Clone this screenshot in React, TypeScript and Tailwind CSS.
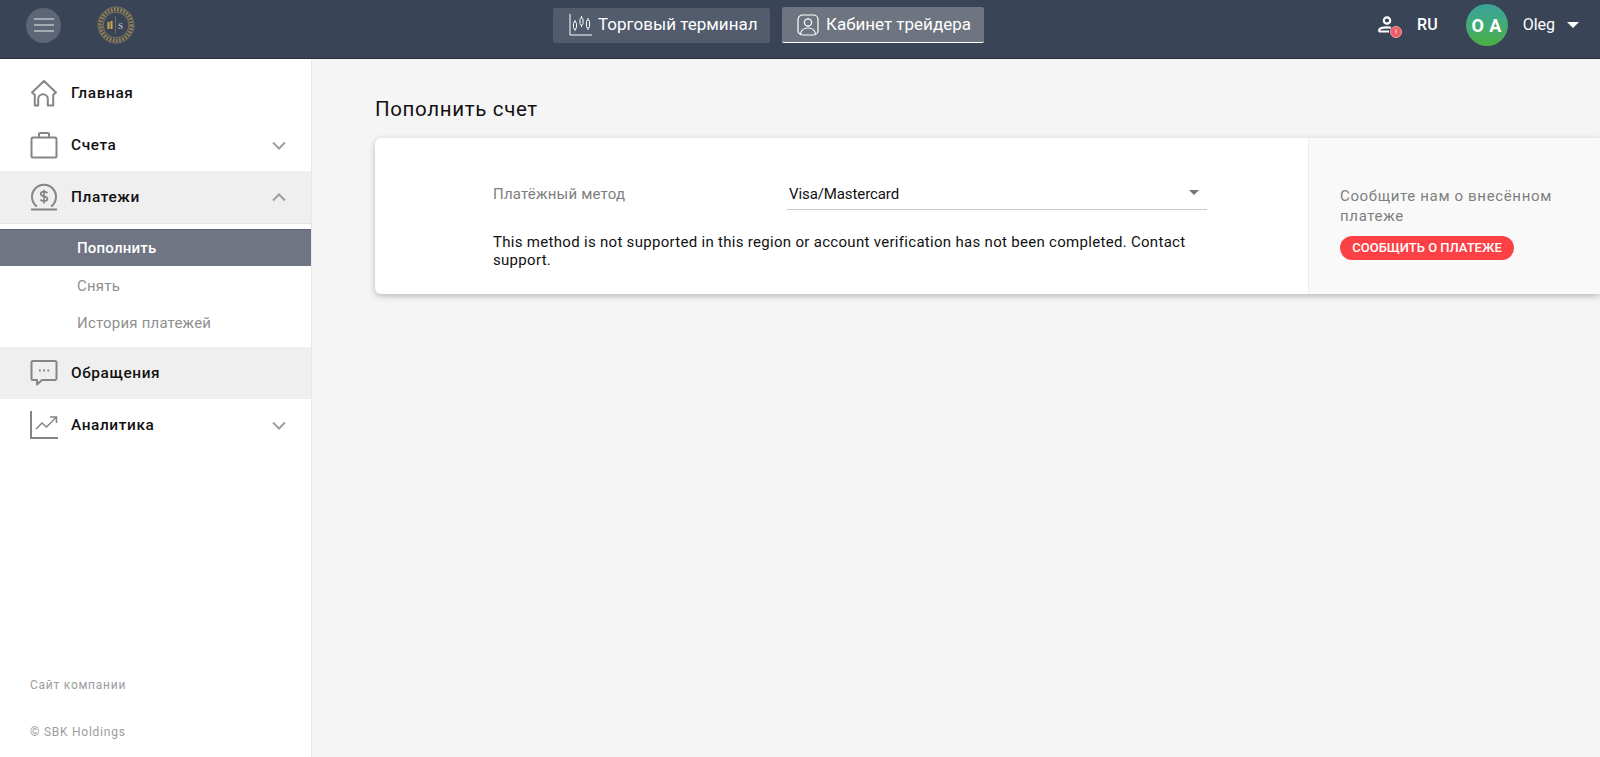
import React from "react";

const ChevronDown = () => (
  <svg width="14" height="9" viewBox="0 0 14 9" fill="none" stroke="#9e9e9e" strokeWidth="2">
    <path d="M1 1.500l6 6 6-6" />
  </svg>
);

const ChevronUp = () => (
  <svg width="14" height="9" viewBox="0 0 14 9" fill="none" stroke="#9e9e9e" strokeWidth="2">
    <path d="M1 7.500l6-6 6 6" />
  </svg>
);

const HomeIcon = () => (
  <svg width="28" height="28" viewBox="0 0 28 28" fill="none" stroke="#858585" strokeWidth="2" strokeLinejoin="round">
    <path d="M2 13.500L14 2l12 11.500-2.800 2.200V26.500h-5.400v-6.500a4.800 4.800 0 0 0-9.600 0v6.500H4.800V15.700z" />
  </svg>
);

const CaseIcon = () => (
  <svg width="28" height="28" viewBox="0 0 28 28" fill="none" stroke="#858585" strokeWidth="2" strokeLinejoin="round">
    <rect x="1.500" y="6.500" width="25" height="20" rx="1.500" />
    <path d="M9 6.500V3a1 1 0 0 1 1-1h8a1 1 0 0 1 1 1v3.500" />
  </svg>
);

const CoinIcon = () => (
  <svg width="28" height="28" viewBox="0 0 28 28" fill="none" stroke="#858585" strokeWidth="2">
    <path d="M7 23.500a12 12 0 1 1 14 0" />
    <path d="M1 26.500h26" />
    <path d="M17.500 10.200c-.7-1-2-1.500-3.500-1.500-1.800 0-3.200.8-3.200 2.300 0 3.200 6.600 1.500 6.600 4.800 0 1.500-1.500 2.400-3.400 2.400-1.500 0-2.900-.6-3.600-1.700M14 6.800v13.600" strokeWidth="1.700" />
  </svg>
);

const ChatIcon = () => (
  <svg width="28" height="28" viewBox="0 0 28 28" fill="none" stroke="#858585" strokeWidth="2" strokeLinejoin="round">
    <path d="M3 2h22a1.500 1.500 0 0 1 1.500 1.500v16a1.500 1.500 0 0 1-1.500 1.500H12l-5 4.500V21H3a1.500 1.500 0 0 1-1.500-1.500v-16A1.500 1.500 0 0 1 3 2z" />
    <path d="M9 11.500h1.800M13.200 11.500H15M17.400 11.500h1.800" strokeWidth="2" />
  </svg>
);

const ChartIcon = () => (
  <svg width="28" height="28" viewBox="0 0 28 28" fill="none" stroke="#858585" strokeWidth="2">
    <path d="M1 0v27h27" />
    <path d="M6 18l6-6 4.500 4L26 6.500M20 6h6.500v6" strokeWidth="1.500" />
  </svg>
);

const TerminalIcon = () => (
  <svg width="24" height="22" viewBox="0 0 24 22" fill="none" stroke="#ffffff" strokeWidth="1">
    <path d="M1 0v21h22" />
    <rect x="4.500" y="8" width="3" height="7" rx="1.500" />
    <rect x="11" y="4" width="3" height="7" rx="1.500" />
    <rect x="17.500" y="6" width="3" height="8" rx="1.500" />
    <path d="M6 6v2M6 15v2M12.500 2v2M12.500 11v2M19 4v2M19 14v2" />
  </svg>
);

const TraderIcon = () => (
  <svg width="22" height="22" viewBox="0 0 22 22" fill="none" stroke="#ffffff" strokeWidth="1.200">
    <rect x="1" y="1" width="20" height="20" rx="4.500" />
    <circle cx="11" cy="8.500" r="3.600" />
    <path d="M3.500 20c.6-3.800 3.400-6 7.500-6s6.900 2.200 7.500 6" />
  </svg>
);

const Logo = () => (
  <svg width="38" height="38" viewBox="0 0 38 38">
    <circle cx="19" cy="19" r="18" fill="none" stroke="#7d7358" strokeWidth="1" />
    <circle cx="19" cy="19" r="15.500" fill="none" stroke="#8d7f58" strokeWidth="4" strokeDasharray="2 1.200" />
    <circle cx="19" cy="19" r="12.800" fill="none" stroke="#7d7358" strokeWidth="1" />
    <rect x="10.500" y="16" width="2" height="7" fill="#c9a54f" />
    <rect x="13.500" y="15" width="2" height="8" fill="#c9a54f" />
    <path d="M18.500 10v18" stroke="#7d7150" strokeWidth="0.800" />
    <text x="21" y="23" fontSize="9" fill="#d8d4c4" fontFamily="'Liberation Serif', serif">S</text>
  </svg>
);

type NavRowProps = {
  label: string;
  icon: React.ReactNode;
  chevron?: React.ReactNode;
  shaded?: boolean;
};

const NavRow = ({ label, icon, chevron, shaded }: NavRowProps) => (
  <div className={`flex items-center h-[52px] pl-[30px] pr-[25px] ${shaded ? "bg-[#efefef]" : ""}`}>
    <div className="w-[41px] flex items-center">{icon}</div>
    <span className="flex-1 pt-[2px] text-[15.400px] font-medium tracking-[0.6px] text-[#111111]">{label}</span>
    {chevron}
  </div>
);

const App = () => {
  return (
    <div className="h-[757px] w-[1600px] flex flex-col overflow-hidden bg-[#f5f5f5] font-['Roboto',sans-serif]">
      <header className="relative h-[59px] shrink-0 flex items-center pb-[8px] bg-[#394457] border-b border-[#26303f] text-white">
        <div className="w-[553px] shrink-0 flex items-center pl-[26px]">
          <button className="w-[35px] h-[35px] rounded-full bg-[#5c6676] flex flex-col items-center justify-center gap-[4px]">
            <span className="block w-[20px] h-[2px] bg-[#a4aab4]" />
            <span className="block w-[20px] h-[2px] bg-[#a4aab4]" />
            <span className="block w-[20px] h-[2px] bg-[#a4aab4]" />
          </button>
          <div className="ml-[36px]">
            <Logo />
          </div>
        </div>
        <div className="flex items-center gap-[12px]">
          <div className="w-[217px] h-[35px] rounded-[2px] bg-[#525c6c] flex items-center pl-[16px] gap-[5px] text-[17px]">
            <TerminalIcon />
            <span>Торговый терминал</span>
          </div>
          <div className="w-[202px] h-[36px] rounded-[2px] bg-[#6e7480] border-b-[1px] border-white flex items-center pl-[15px] gap-[7px] text-[17px]">
            <TraderIcon />
            <span>Кабинет трейдера</span>
          </div>
        </div>
        <div className="ml-auto flex items-center">
          <div className="relative w-[24px] h-[22px]">
            <svg width="20" height="20" viewBox="0 0 20 20" fill="none" stroke="#ffffff" strokeWidth="2.200">
              <circle cx="10" cy="6.500" r="3.200" />
              <path d="M2 17.500v-1c0-2.300 3.500-3.200 8-3.200 1.500 0 2.800.1 4 .4M2 17.500h10" />
            </svg>
            <span className="absolute right-[-1px] bottom-[-2px] w-[12px] h-[12px] rounded-full bg-[#ef5a64] border border-[#f5a0a5] text-[8px] leading-[10px] text-center text-white">!</span>
          </div>
          <span className="ml-[16px] text-[16px] font-medium">RU</span>
          <div className="ml-[28px] w-[42px] h-[42px] rounded-full bg-gradient-to-b from-[#3ba39c] to-[#4cb03f] flex items-center justify-center text-[18px] font-bold tracking-[0.5px]">
            O A
          </div>
          <span className="ml-[15px] text-[16px]">Oleg</span>
          <span className="ml-[12px] mr-[21px] w-0 h-0 border-x-[6px] border-x-transparent border-t-[6px] border-t-white" />
        </div>
      </header>

      <div className="flex-1 flex min-h-0">
        <aside className="w-[312px] shrink-0 flex flex-col bg-white border-r border-[#e8e8e8] pt-[8px]">
          <NavRow label="Главная" icon={<HomeIcon />} />
          <NavRow label="Счета" icon={<CaseIcon />} chevron={<ChevronDown />} />
          <NavRow label="Платежи" icon={<CoinIcon />} chevron={<ChevronUp />} shaded />
          <div className="h-[1px] bg-[#e4e4e4]" />
          <div className="mt-[5px] flex flex-col text-[15px] tracking-[0.2px] pb-[5px]">
            <div className="h-[37px] flex items-center pl-[77px] bg-[#6f7583] border-t border-[#5e6472] font-medium text-white">Пополнить</div>
            <div className="h-[39px] flex items-center pl-[77px] pt-[1px] text-[#8f8f8f]">Снять</div>
            <div className="h-[37px] flex items-center pl-[77px] text-[#8f8f8f]">История платежей</div>
          </div>
          <NavRow label="Обращения" icon={<ChatIcon />} shaded />
          <NavRow label="Аналитика" icon={<ChartIcon />} chevron={<ChevronDown />} />
          <div className="mt-auto pl-[30px] pb-[16px] text-[12px] tracking-[0.75px] text-[#9c9c9c] flex flex-col gap-[29px]">
            <span>Сайт компании</span>
            <span>© SBK Holdings</span>
          </div>
        </aside>

        <main className="flex-1 min-w-0 pl-[63px] pt-[38px]">
          <h1 className="text-[20.500px] leading-[24px] tracking-[0.65px] text-[#111111]">Пополнить счет</h1>
          <section className="mt-[17px] h-[156px] flex rounded-l-[6px] bg-white shadow-[0_2px_6px_rgba(0,0,0,0.25)] overflow-hidden">
            <div className="w-[933px] shrink-0 pl-[118px] pt-[37px] pr-[100px]">
              <div className="flex items-start h-[37px]">
                <span className="w-[294px] pt-[8px] text-[15px] tracking-[0.2px] text-[#808080]">Платёжный метод</span>
                <div className="w-[420px] h-[35px] border-b border-[#c8c8c8] flex items-center pl-[2px] pr-[8px] pt-[4px] text-[15px] tracking-[-0.1px] text-[#111111]">
                  <span className="flex-1">Visa/Mastercard</span>
                  <span className="mb-[4px] w-0 h-0 border-x-[5px] border-x-transparent border-t-[5px] border-t-[#757575]" />
                </div>
              </div>
              <p className="mt-[21px] text-[15px] leading-[18px] tracking-[0.3px] text-[#111111]">
                This method is not supported in this region or account verification has not been completed. Contact support.
              </p>
            </div>
            <div className="flex-1 bg-[#f9f9f9] border-l border-[#eeeeee] pl-[31px] pt-[48px]">
              <p className="text-[15px] leading-[20px] tracking-[0.65px] text-[#808080] w-[230px]">Сообщите нам о внесённом платеже</p>
              <button className="mt-[10px] h-[24px] w-[174px] rounded-full bg-[#fb4145] text-white text-[13px] font-medium uppercase">
                Сообщить о платеже
              </button>
            </div>
          </section>
        </main>
      </div>
    </div>
  );
};

export default App;
